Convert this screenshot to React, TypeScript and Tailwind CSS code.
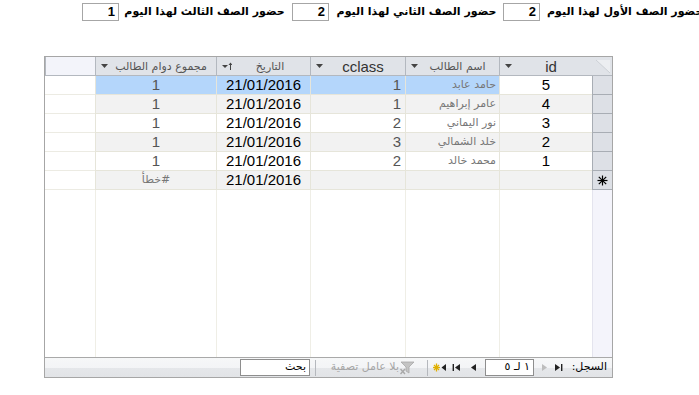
import React from "react";

const AR = "font-['DejaVu_Sans',sans-serif]";
const LA = "font-['Liberation_Sans',Arial,sans-serif]";

function DropArrow() {
  return (
    <svg width="7" height="4" viewBox="0 0 7 4" className="shrink-0">
      <polygon points="0,0 7,0 3.5,4" fill="#444" />
    </svg>
  );
}

function SortArrow() {
  return (
    <svg width="10" height="9" viewBox="0 0 10 9" className="shrink-0">
      <polygon points="0,3 6,3 3,6" fill="#444" />
      <line x1="8.5" y1="1" x2="8.5" y2="8" stroke="#444" strokeWidth="1" />
      <polygon points="6.5,3 10.5,3 8.5,0.5" fill="#444" />
    </svg>
  );
}

function Star({ color = "#000", size = 11 }: { color?: string; size?: number }) {
  return (
    <svg width={size} height={size} viewBox="0 0 11 11">
      <g stroke={color} strokeWidth="1.2">
        <line x1="5.5" y1="0.5" x2="5.5" y2="10.5" />
        <line x1="0.5" y1="5.5" x2="10.5" y2="5.5" />
        <line x1="1.8" y1="1.8" x2="9.2" y2="9.2" />
        <line x1="9.2" y1="1.8" x2="1.8" y2="9.2" />
      </g>
    </svg>
  );
}

const W = {
  sel: "w-[20px]",
  id: "w-[93px]",
  name: "w-[94px]",
  cls: "w-[95px]",
  date: "w-[94px]",
  sum: "w-[121px]",
  fill: "w-[50px]",
};

type Row = { id: string; name: string; cls: string; date: string; sum: string };
const rows: Row[] = [
  { id: "5", name: "حامد عابد", cls: "1", date: "21/01/2016", sum: "1" },
  { id: "4", name: "عامر إبراهيم", cls: "1", date: "21/01/2016", sum: "1" },
  { id: "3", name: "نور اليماني", cls: "2", date: "21/01/2016", sum: "1" },
  { id: "2", name: "خلد الشمالي", cls: "3", date: "21/01/2016", sum: "1" },
  { id: "1", name: "محمد خالد", cls: "2", date: "21/01/2016", sum: "1" },
];

function HeaderCell({ w, text, latin, sort }: { w: string; text: string; latin?: boolean; sort?: boolean }) {
  return (
    <div className={`${w} h-full shrink-0 border-l border-[#b3b8bf] bg-[#e0e3e8] flex items-center pl-[5px] pr-[2px]`}>
      <div
        className={`flex-1 text-center ${latin ? `${LA} text-[15px] text-[#333]` : `${AR} text-[11px] text-[#555]`} leading-none whitespace-nowrap`}
      >
        {text}
      </div>
      {sort ? <SortArrow /> : <DropArrow />}
    </div>
  );
}

function DataRow({ r, i }: { r: Row; i: number }) {
  const selected = i === 0;
  const alt = i % 2 === 1;
  const bg = selected ? "bg-[#b4d6fb]" : alt ? "bg-[#f2f2f2]" : "bg-white";
  const cell = `h-full shrink-0 border-l border-b border-[#e6e5da] flex items-center`;
  return (
    <div className="flex h-[19px]" dir="rtl">
      <div className={`${W.sel} h-full shrink-0 border-l border-b border-[#a8adb4] bg-[#dde0e6]`} />
      <div className={`${W.id} ${cell} ${selected ? "bg-white" : bg} justify-center ${LA} text-[15px] text-black`}>{r.id}</div>
      <div className={`${W.name} ${cell} ${bg} justify-start pr-[3px] ${AR} text-[11px] text-[#777]`}>{r.name}</div>
      <div className={`${W.cls} ${cell} ${bg} justify-start pr-[4px] ${LA} text-[15px] text-[#555]`}>{r.cls}</div>
      <div className={`${W.date} ${cell} ${bg} justify-center ${LA} text-[15px] text-black`}>{r.date}</div>
      <div className={`${W.sum} ${cell} ${bg} justify-center ${LA} text-[15px] text-[#555]`}>{r.sum}</div>
      <div className={`${W.fill} h-full shrink-0 border-b border-[#ecebe3] bg-white`} />
    </div>
  );
}

function NewRow() {
  const cell = `h-full shrink-0 border-l border-b border-[#e6e5da] bg-[#f2f2f2] flex items-center`;
  return (
    <div className="flex h-[19px]" dir="rtl">
      <div className={`${W.sel} h-full shrink-0 border-l border-b border-[#a8adb4] bg-[#dde0e6] flex items-center justify-center`}>
        <Star />
      </div>
      <div className={`${W.id} ${cell}`} />
      <div className={`${W.name} ${cell}`} />
      <div className={`${W.cls} ${cell}`} />
      <div className={`${W.date} ${cell} justify-center ${LA} text-[15px] text-black`}>21/01/2016</div>
      <div className={`${W.sum} ${cell} justify-center ${AR} text-[11px] text-[#777]`}>#خطأ</div>
      <div className={`${W.fill} h-full shrink-0 border-b border-[#ecebe3] bg-white`} />
    </div>
  );
}

function EmptyArea() {
  const c = "h-full shrink-0 border-l border-[#efeee6] bg-white";
  return (
    <div className="flex flex-1" dir="rtl">
      <div className={`${W.sel} h-full shrink-0 border-l border-[#e4e4ee] bg-[#f4f4fb]`} />
      <div className={`${W.id} ${c}`} />
      <div className={`${W.name} ${c}`} />
      <div className={`${W.cls} ${c}`} />
      <div className={`${W.date} ${c}`} />
      <div className={`${W.sum} ${c}`} />
      <div className={`${W.fill} h-full shrink-0 bg-white`} />
    </div>
  );
}

function TriRight({ color = "#222", bar = false }: { color?: string; bar?: boolean }) {
  return (
    <svg width="9" height="9" viewBox="0 0 9 9">
      <polygon points={bar ? "1,1 6,4.5 1,8" : "2,1 7,4.5 2,8"} fill={color} />
      {bar && <rect x="7" y="1" width="1.4" height="7" fill={color} />}
    </svg>
  );
}

function TriLeft({ color = "#222", bar = false }: { color?: string; bar?: boolean }) {
  return (
    <svg width="9" height="9" viewBox="0 0 9 9">
      {bar && <rect x="0.6" y="1" width="1.4" height="7" fill={color} />}
      <polygon points={bar ? "8,1 3,4.5 8,8" : "7,1 2,4.5 7,8"} fill={color} />
    </svg>
  );
}

function NewRec() {
  return (
    <svg width="14" height="9" viewBox="0 0 14 9">
      <g stroke="#e0b000" strokeWidth="1.3">
        <line x1="3.5" y1="0.5" x2="3.5" y2="8.5" />
        <line x1="0" y1="4.5" x2="7" y2="4.5" />
        <line x1="1" y1="2" x2="6" y2="7" />
        <line x1="6" y1="2" x2="1" y2="7" />
      </g>
      <polygon points="13,1 8.5,4.5 13,8" fill="#222" />
    </svg>
  );
}

function FilterIcon() {
  return (
    <svg width="15" height="14" viewBox="0 0 15 14">
      <polygon points="1,1 14,1 9,6 9,12 6,10 6,6" fill="#c4c4c4" stroke="#a8a8a8" strokeWidth="0.8" />
      <g stroke="#a9a9a9" strokeWidth="1.4">
        <line x1="0.5" y1="8" x2="5" y2="13" />
        <line x1="5" y1="8" x2="0.5" y2="13" />
      </g>
    </svg>
  );
}

function NavBar() {
  return (
    <div
      className="h-[20px] shrink-0 border-t border-[#a9a9a9] flex items-center bg-[linear-gradient(to_bottom,#f6f7f8_0%,#f3f4f6_50%,#e5e7ea_50%,#e2e4e7_100%)]"
      dir="rtl"
    >
      <div className={`w-[42px] mr-[5px] shrink-0 ${AR} text-[11px] text-black text-right whitespace-nowrap`}>السجل:</div>
      <div className="w-[14px] shrink-0 flex justify-center items-center">
        <TriRight bar />
      </div>
      <div className="w-[14px] shrink-0 flex justify-center items-center">
        <TriRight color="#bdbdbd" />
      </div>
      <div className={`w-[49px] h-[17px] mr-[3px] shrink-0 bg-white border border-[#8e8e8e] flex items-center pr-[3px] ${AR} text-[11px] text-black whitespace-nowrap`}>
        ١ لـ ٥
      </div>
      <div className="w-[14px] mr-[5px] shrink-0 flex justify-center items-center">
        <TriLeft />
      </div>
      <div className="w-[14px] mr-[3px] shrink-0 flex justify-center items-center">
        <TriLeft bar />
      </div>
      <div className="w-[16px] mr-[1px] shrink-0 flex justify-center items-center">
        <NewRec />
      </div>
      <div className="w-px h-[16px] mr-[4px] shrink-0 bg-[#b5b8bd]" />
      <div className="w-[15px] mr-[12px] shrink-0 flex justify-center items-center">
        <FilterIcon />
      </div>
      <div className={`w-[80px] mr-[1px] shrink-0 ${AR} text-[11px] text-[#a5a5a5] text-right whitespace-nowrap overflow-hidden`}>
        بلا عامل تصفية
      </div>
      <div className="w-px h-[16px] mr-[3px] shrink-0 bg-[#b5b8bd]" />
      <div className={`w-[70px] h-[17px] mr-[5px] shrink-0 bg-white border border-[#8e8e8e] flex items-center pr-[3px] ${AR} text-[11px] text-black`}>
        بحث
      </div>
    </div>
  );
}

function Sheet() {
  return (
    <div className="ml-[44px] mt-[35px] w-[569px] h-[322px] border border-[#a6a6a6] flex flex-col bg-white">
      <div className="flex h-[19px] shrink-0 border-b border-[#b3b8bf]" dir="rtl">
        <div className={`${W.sel} h-full shrink-0 bg-[#e0e3e8] flex items-start justify-end`}>
          <svg width="20" height="18" viewBox="0 0 20 18">
            <polygon points="4,3 18,3 18,16" fill="#eceef1" />
            <line x1="4" y1="3" x2="18" y2="16" stroke="#cdd1d6" strokeWidth="1" />
          </svg>
        </div>
        <HeaderCell w={W.id} text="id" latin />
        <HeaderCell w={W.name} text="اسم الطالب" />
        <HeaderCell w={W.cls} text="cclass" latin />
        <HeaderCell w={W.date} text="التاريخ" sort />
        <HeaderCell w={W.sum} text="مجموع دوام الطالب" />
        <div className={`${W.fill} h-full shrink-0 border-l border-[#b3b8bf] bg-[#f3f4fa]`} />
      </div>
      {rows.map((r, i) => (
        <DataRow key={r.id} r={r} i={i} />
      ))}
      <NewRow />
      <EmptyArea />
      <NavBar />
    </div>
  );
}

function TopBox({ v }: { v: string }) {
  return (
    <div className={`w-[37px] h-[18px] shrink-0 border border-[#a6a6a6] bg-white flex items-center justify-end pr-[3px] ${LA} text-[13px] font-bold text-black`}>
      {v}
    </div>
  );
}

function TopBar() {
  return (
    <div className="flex items-center h-[18px] mt-[3px] pl-[82px] whitespace-nowrap">
      <TopBox v="1" />
      <div className={`w-[165px] ml-[3px] shrink-0 ${AR} text-[11px] font-bold text-black text-center`} dir="rtl">
        حضور الصف الثالث لهذا اليوم
      </div>
      <div className="ml-[5px]">
        <TopBox v="2" />
      </div>
      <div className={`w-[161px] ml-[7px] shrink-0 ${AR} text-[11px] font-bold text-black text-center`} dir="rtl">
        حضور الصف الثاني لهذا اليوم
      </div>
      <div className="ml-[6px]">
        <TopBox v="2" />
      </div>
      <div className={`w-[170px] ml-[7px] shrink-0 ${AR} text-[11px] font-bold text-black text-left`} dir="rtl">
        حضور الصف الأول لهذا اليوم
      </div>
    </div>
  );
}

export default function App() {
  return (
    <div className="w-[699px] h-[395px] bg-white overflow-hidden">
      <TopBar />
      <Sheet />
    </div>
  );
}
